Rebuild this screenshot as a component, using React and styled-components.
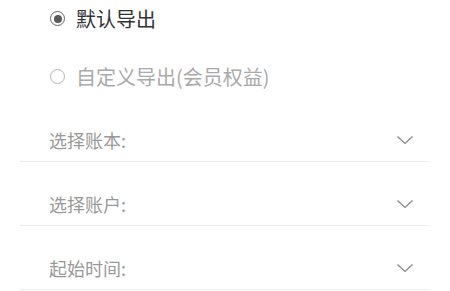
import React, { useState } from "react";
import styled, { createGlobalStyle } from "styled-components";

const GlobalStyle = createGlobalStyle`
  html, body {
    margin: 0;
    padding: 0;
    background: #fff;
  }
  body {
    font-family: "Noto Sans CJK SC", "Noto Sans", sans-serif;
  }
`;

const ExportForm = () => {
  const [mode, setMode] = useState("default");

  const radios = [
    { value: "default", label: "默认导出" },
    { value: "custom", label: "自定义导出(会员权益)" },
  ];

  const fields = ["选择账本:", "选择账户:", "起始时间:"];

  return (
    <>
      <GlobalStyle />
      <Page>
        <RadioGroup>
          {radios.map((r) => (
            <RadioRow key={r.value} onClick={() => setMode(r.value)}>
              <RadioCircle $checked={mode === r.value} />
              <RadioLabel $checked={mode === r.value}>{r.label}</RadioLabel>
            </RadioRow>
          ))}
        </RadioGroup>
        <FieldList>
          {fields.map((f) => (
            <FieldRow key={f}>
              <FieldLabel>{f}</FieldLabel>
              <Chevron viewBox="0 0 16 8">
                <path d="M0.5 0.5 L8 7.5 L15.5 0.5" />
              </Chevron>
            </FieldRow>
          ))}
        </FieldList>
      </Page>
    </>
  );
};

export default ExportForm;

const Page = styled.div`
  width: 450px;
  height: 291px;
  overflow: hidden;
  background: #fff;
`;

const RadioGroup = styled.div`
  display: flex;
  flex-direction: column;
  gap: 21px;
  padding-left: 50px;
`;

const RadioRow = styled.div`
  display: flex;
  align-items: center;
  height: 37px;
  cursor: pointer;
`;

const RadioCircle = styled.span`
  position: relative;
  flex: none;
  width: 15px;
  height: 15px;
  box-sizing: border-box;
  border-radius: 50%;
  border: 1.3px solid ${({ $checked }) => ($checked ? "#666" : "#b3b3b3")};
  margin-right: 11px;

  &::after {
    content: "";
    display: ${({ $checked }) => ($checked ? "block" : "none")};
    position: absolute;
    left: 50%;
    top: 50%;
    width: 8px;
    height: 8px;
    margin: -4px 0 0 -4px;
    border-radius: 50%;
    background: #5a5a5a;
  }
`;

const RadioLabel = styled.span`
  font-size: 20px;
  line-height: 20px;
  color: ${({ $checked }) => ($checked ? "#333" : "#aaa")};
`;

const FieldList = styled.div`
  margin-top: 3px;
  padding: 0 20px;
`;

const FieldRow = styled.div`
  display: flex;
  align-items: center;
  justify-content: space-between;
  box-sizing: border-box;
  height: 64px;
  padding: 20px 17px 0 29px;
  border-bottom: 1px solid #eee;
`;

const FieldLabel = styled.span`
  font-size: 18px;
  line-height: 18px;
  color: #999;
`;

const Chevron = styled.svg`
  width: 16px;
  height: 8px;
  fill: none;
  stroke: #888;
  stroke-width: 1.2;
`;
